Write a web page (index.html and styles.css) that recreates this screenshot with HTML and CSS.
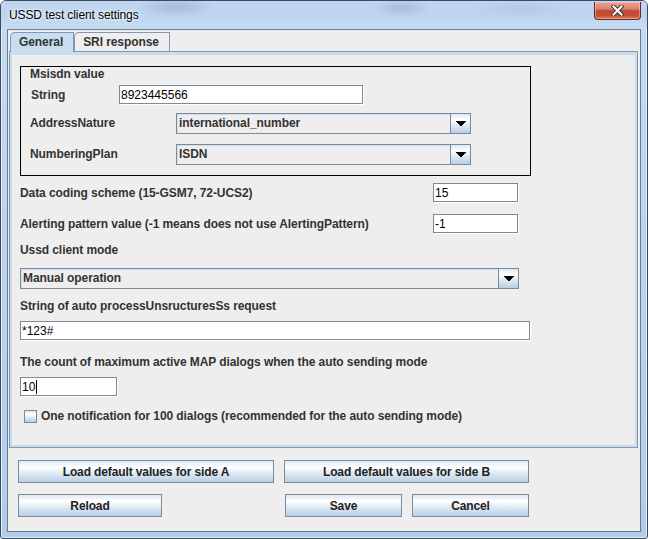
FILE: index.html
```html
<!DOCTYPE html>
<html>
<head>
<meta charset="utf-8">
<title>USSD test client settings</title>
<link rel="stylesheet" href="styles.css">
</head>
<body>
<div class="window">
  <div class="titlebar">
    <span class="title">USSD test client settings</span>
    <div class="close-btn">
      <svg width="13" height="11" viewBox="0 0 13 11">
        <path d="M2.5 1.5 L10.5 9.5 M10.5 1.5 L2.5 9.5" stroke="#3a3a3a" stroke-width="4" stroke-linecap="square" fill="none"/>
        <path d="M2.5 1.5 L10.5 9.5 M10.5 1.5 L2.5 9.5" stroke="#ffffff" stroke-width="2" stroke-linecap="square" fill="none"/>
      </svg>
    </div>
  </div>
  <div class="client">
    <div class="tabbed">
      <div class="tabstrip">
        <div class="tab tab-selected">General</div>
        <div class="tab">SRI response</div>
      </div>
      <div class="panel">
        <div class="panel-inner">
          <div class="msisdn">
            <div class="box-title">Msisdn value</div>
            <div class="row row-string">
              <span class="lbl lbl-string">String</span>
              <div class="field field-msisdn">8923445566</div>
            </div>
            <div class="row row-combo1">
              <span class="lbl lbl-combo">AddressNature</span>
              <div class="combo combo-small">
                <span class="combo-text">international_number</span>
                <span class="combo-btn"><svg width="10" height="5" viewBox="0 0 10 5"><path d="M0 0h10v1H0zM1 1h8v1H1zM2 2h6v1H2zM3 3h4v1H3zM4 4h2v1H4z" fill="#000"/></svg></span>
              </div>
            </div>
            <div class="row row-combo2">
              <span class="lbl lbl-combo">NumberingPlan</span>
              <div class="combo combo-small">
                <span class="combo-text">ISDN</span>
                <span class="combo-btn"><svg width="10" height="5" viewBox="0 0 10 5"><path d="M0 0h10v1H0zM1 1h8v1H1zM2 2h6v1H2zM3 3h4v1H3zM4 4h2v1H4z" fill="#000"/></svg></span>
              </div>
            </div>
          </div>

          <div class="row row-dcs">
            <span class="lbl lbl-wide">Data coding scheme (15-GSM7, 72-UCS2)</span>
            <div class="field field-short">15</div>
          </div>
          <div class="row row-alert">
            <span class="lbl lbl-wide">Alerting pattern value (-1 means does not use AlertingPattern)</span>
            <div class="field field-short">-1</div>
          </div>

          <div class="lbl-line lbl-mode">Ussd client mode</div>
          <div class="combo combo-mode">
            <span class="combo-text">Manual operation</span>
            <span class="combo-btn"><svg width="10" height="5" viewBox="0 0 10 5"><path d="M0 0h10v1H0zM1 1h8v1H1zM2 2h6v1H2zM3 3h4v1H3zM4 4h2v1H4z" fill="#000"/></svg></span>
          </div>

          <div class="lbl-line lbl-auto">String of auto processUnsructuresSs request</div>
          <div class="field field-long">*123#</div>

          <div class="lbl-line lbl-count">The count of maximum active MAP dialogs when the auto sending mode</div>
          <div class="field field-count">10<span class="caret"></span></div>

          <div class="check-row">
            <span class="checkbox"></span>
            <span class="check-text">One notification for 100 dialogs (recommended for the auto sending mode)</span>
          </div>
        </div>
      </div>
    </div>

    <div class="buttons">
      <div class="btn-row">
        <div class="btn btn-load-a">Load default values for side A</div>
        <div class="btn btn-load-b">Load default values for side B</div>
      </div>
      <div class="btn-row btn-row2">
        <div class="btn btn-reload">Reload</div>
        <div class="btn btn-save">Save</div>
        <div class="btn btn-cancel">Cancel</div>
      </div>
    </div>
  </div>
</div>
</body>
</html>
```

FILE: styles.css
```css
* { box-sizing: border-box; }
html, body { margin: 0; padding: 0; }
body {
  width: 648px;
  height: 539px;
  overflow: hidden;
  background: #ffffff;
  font-family: "Liberation Sans", Arial, sans-serif;
}

.window {
  width: 648px;
  height: 539px;
  border: 1px solid #3b4a5e;
  border-radius: 6px 6px 3px 3px;
  background: linear-gradient(180deg, #c6dbf1 0%, #bcd4ee 40%, #b2cdeb 100%);
  box-shadow: inset 0 0 0 1px rgba(255, 255, 255, 0.6);
  display: flex;
  flex-direction: column;
}

.titlebar {
  height: 28px;
  display: flex;
  align-items: flex-start;
  padding-left: 8px;
  border-radius: 5px 5px 0 0;
  background:
    radial-gradient(ellipse 40px 10px at 175px 6px, rgba(120, 140, 170, 0.35), rgba(120, 140, 170, 0) 100%),
    radial-gradient(ellipse 30px 9px at 400px 7px, rgba(110, 130, 160, 0.3), rgba(110, 130, 160, 0) 100%),
    radial-gradient(ellipse 50px 10px at 520px 8px, rgba(150, 175, 205, 0.3), rgba(150, 175, 205, 0) 100%),
    linear-gradient(180deg, #c0d6ef 0%, #bdd5f0 60%, #c8ddf3 100%);
}

.title {
  font-size: 12px;
  line-height: 14px;
  margin-top: 7px;
  color: #000;
  letter-spacing: -0.1px;
  text-shadow: 0 0 5px #ffffff, 0 0 3px #ffffff;
}

.close-btn {
  margin-left: auto;
  margin-right: 6px;
  margin-top: 1px;
  width: 47px;
  height: 18px;
  border: 1px solid #6a2a22;
  border-top: none;
  border-radius: 0 0 4px 4px;
  background: linear-gradient(180deg, #e6a493 0%, #d88570 40%, #c5462f 52%, #c84f37 80%, #dc7a63 100%);
  box-shadow: inset 0 0 0 1px rgba(255, 210, 200, 0.45);
  display: flex;
  align-items: center;
  justify-content: center;
}

.client {
  flex: 1;
  margin: 0 6px 6px 6px;
  border: 1px solid #6b7c90;
  background: #eeeeee;
  display: flex;
  flex-direction: column;
}

.tabbed {
  padding: 2px 2px 0 1px;
}

.tabstrip {
  display: flex;
  align-items: flex-start;
  height: 19px;
  padding-left: 1px;
}

.tab {
  height: 19px;
  border: 1px solid #8497ae;
  border-bottom: none;
  border-radius: 5px 0 0 0;
  padding: 0 10px 0 8px;
  font-size: 12px;
  font-weight: bold;
  line-height: 18px;
  color: #333333;
  background: #eeeeee;
  letter-spacing: -0.08px;
}

.tab-selected {
  height: 20px;
  background: #c8ddf2;
  position: relative;
  z-index: 1;
}

.panel {
  height: 397px;
  border: 1px solid #8497ae;
  background: #c8ddf2;
  padding: 3px 2px 2px 2px;
}

.panel-inner {
  height: 100%;
  background: #eeeeee;
  padding-left: 8px;
  display: flex;
  flex-direction: column;
  align-items: flex-start;
  color: #333333;
  font-size: 12px;
  font-weight: bold;
  letter-spacing: -0.08px;
}

.msisdn {
  margin-top: 11px;
  width: 511px;
  height: 110px;
  border: 1px solid #000000;
}

.box-title {
  height: 14px;
  line-height: 14px;
  padding-left: 9px;
}

.row {
  display: flex;
  align-items: baseline;
}

.lbl { line-height: 15px; white-space: nowrap; }
.lbl-string { width: 98px; padding-left: 10px; }
.lbl-combo { width: 155px; padding-left: 9px; }
.lbl-wide { width: 413px; }

.row-string { margin-top: 4px; }
.row-combo1 { margin-top: 9px; }
.row-combo2 { margin-top: 10px; }

.field {
  height: 19px;
  border: 1px solid #7a8a99;
  box-shadow: 1px 1px 0 #ffffff;
  background: #ffffff;
  padding: 1px 0 0 1px;
  line-height: 17px;
  font-weight: normal;
  color: #000000;
  letter-spacing: 0;
  white-space: nowrap;
  overflow: hidden;
}

.field-msisdn { width: 244px; }
.field-short { width: 85px; }
.field-long { width: 510px; margin-top: 7px; }
.field-count { width: 97px; margin-top: 7px; }

.caret {
  display: inline-block;
  width: 1px;
  height: 14px;
  background: #000000;
  margin-left: 1px;
  vertical-align: -3px;
}

.combo {
  height: 21px;
  display: flex;
  border: 1px solid #7a8a99;
  background: #eeeeee;
}
.combo-small { width: 295px; }
.combo-mode { width: 499px; margin-top: 10px; }

.combo-text {
  flex: 1;
  line-height: 19px;
  padding-left: 2px;
  color: #333333;
  box-shadow: inset 1px 1px 0 #cfdff0;
  white-space: nowrap;
}

.combo-btn {
  width: 20px;
  border-left: 1px solid #7a8a99;
  background: linear-gradient(180deg, #dde8f3 0%, #ffffff 30%, #dde8f3 60%, #b8cfe5 100%);
  display: flex;
  align-items: center;
  justify-content: center;
}

.row-dcs { margin-top: 7px; }
.row-alert { margin-top: 12px; }

.lbl-line { line-height: 15px; white-space: nowrap; }
.lbl-mode { margin-top: 10px; }
.lbl-auto { margin-top: 10px; }
.lbl-count { margin-top: 15px; }

.check-row {
  margin-top: 13px;
  margin-left: 4px;
  display: flex;
  align-items: center;
  height: 15px;
}

.checkbox {
  width: 13px;
  height: 13px;
  border: 1px solid #7a8a99;
  background: linear-gradient(180deg, #dde8f3 0%, #ffffff 30%, #dde8f3 60%, #b8cfe5 100%);
  margin-right: 4px;
}

.check-text { line-height: 15px; white-space: nowrap; }

.buttons {
  padding: 12px 0 0 10px;
}

.btn-row {
  display: flex;
}
.btn-row2 { margin-top: 11px; }

.btn {
  height: 23px;
  border: 1px solid #7a8a99;
  background: linear-gradient(180deg, #dde8f3 0%, #ffffff 30%, #dde8f3 60%, #b8cfe5 100%);
  font-size: 12px;
  font-weight: bold;
  color: #222222;
  letter-spacing: -0.12px;
  display: flex;
  align-items: center;
  justify-content: center;
  white-space: nowrap;
}

.btn-load-a { width: 256px; }
.btn-load-b { width: 245px; margin-left: 10px; }
.btn-reload { width: 144px; }
.btn-save { width: 117px; margin-left: 123px; }
.btn-cancel { width: 117px; margin-left: 10px; }
```
